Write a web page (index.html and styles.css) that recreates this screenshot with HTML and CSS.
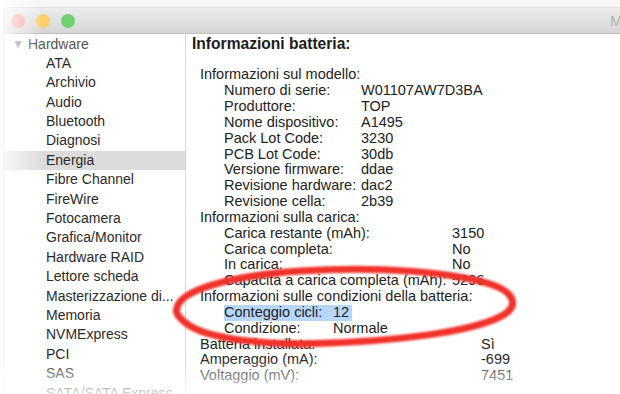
FILE: index.html
```html
<!DOCTYPE html>
<html lang="it">
<head>
    <meta charset="UTF-8">
    <meta name="viewport" content="width=device-width, initial-scale=1.0">
    <title>Informazioni batteria</title>
    <link rel="stylesheet" href="styles.css">
</head>
<body>
    <div class="window">
        <div class="titlebar">
            <div class="lights">
                <span class="light red"></span>
                <span class="light yellow"></span>
                <span class="light green"></span>
            </div>
            <div class="title">MacBook Pro</div>
        </div>

        <div class="main">
            <ul class="sidebar">
                <li class="group"><span class="arrow">▼</span>Hardware</li>
                <li>ATA</li>
                <li>Archivio</li>
                <li>Audio</li>
                <li>Bluetooth</li>
                <li>Diagnosi</li>
                <li class="selected">Energia</li>
                <li>Fibre Channel</li>
                <li>FireWire</li>
                <li>Fotocamera</li>
                <li>Grafica/Monitor</li>
                <li>Hardware RAID</li>
                <li>Lettore scheda</li>
                <li>Masterizzazione di...</li>
                <li>Memoria</li>
                <li>NVMExpress</li>
                <li>PCI</li>
                <li>SAS</li>
                <li>SATA/SATA Express</li>
            </ul>

            <div class="content">
                <h2 class="heading">Informazioni batteria:</h2>

                <div class="section">
                    <div class="section-title">Informazioni sul modello:</div>
                    <div class="rows rows-model">
                        <span>Numero di serie:</span><span>W01107AW7D3BA</span>
                        <span>Produttore:</span><span>TOP</span>
                        <span>Nome dispositivo:</span><span>A1495</span>
                        <span>Pack Lot Code:</span><span>3230</span>
                        <span>PCB Lot Code:</span><span>30db</span>
                        <span>Versione firmware:</span><span>ddae</span>
                        <span>Revisione hardware:</span><span>dac2</span>
                        <span>Revisione cella:</span><span>2b39</span>
                    </div>
                </div>

                <div class="section">
                    <div class="section-title">Informazioni sulla carica:</div>
                    <div class="rows rows-charge">
                        <span>Carica restante (mAh):</span><span>3150</span>
                        <span>Carica completa:</span><span>No</span>
                        <span>In carica:</span><span>No</span>
                        <span>Capacità a carica completa (mAh):</span><span>5296</span>
                    </div>
                </div>

                <div class="section">
                    <div class="section-title">Informazioni sulle condizioni della batteria:</div>
                    <div class="rows-block">
                        <div class="rows rows-health highlight">
                            <span>Conteggio cicli:</span><span>12</span>
                        </div>
                        <div class="rows rows-health">
                            <span>Condizione:</span><span>Normale</span>
                        </div>
                    </div>
                </div>

                <div class="rows rows-top">
                    <span>Batteria installata:</span><span>Sì</span>
                    <span>Amperaggio (mA):</span><span>-699</span>
                    <span>Voltaggio (mV):</span><span>7451</span>
                </div>
            </div>
        </div>
    </div>

    <!-- segno rosso a mano -->
    <svg class="mark" width="620" height="394" viewBox="0 0 620 394">
        <defs>
            <filter id="soft" x="-10%" y="-30%" width="120%" height="160%">
                <feGaussianBlur stdDeviation="1.3"/>
            </filter>
        </defs>
        <path d="M 177 308
                 C 180 290, 230 276, 300 271
                 C 380 266, 450 272, 490 284
                 C 515 292, 518 305, 505 314
                 C 480 330, 410 340, 330 343
                 C 260 346, 210 338, 190 326
                 C 178 318, 175 312, 177 308 Z"
              fill="none" stroke="#f0322a" stroke-width="7" filter="url(#soft)"/>
    </svg>

    <div class="fade"></div>
</body>
</html>
```

FILE: styles.css
```css
* {
    margin: 0;
    padding: 0;
    box-sizing: border-box;
}

body {
    width: 620px;
    height: 394px;
    overflow: hidden;
    position: relative;
    background: #f6f6f6;
    font-family: 'Liberation Sans', Arial, sans-serif;
    color: #222;
}

.window {
    margin: 7px 0 0 3px;
    width: 617px;
    height: 387px;
    background: white;
    border-left: 1px solid #cfcfcf;
    border-top: 1px solid #e2e2e2;
    border-top-left-radius: 5px;
    overflow: hidden;
}

/* barra del titolo */
.titlebar {
    height: 26px;
    display: flex;
    align-items: center;
    padding-left: 7px;
    background: linear-gradient(to bottom, #ececec, #d6d6d6);
    border-bottom: 1px solid #bdbdbd;
}

.lights {
    display: flex;
    gap: 11px;
    flex-shrink: 0;
}

.light {
    width: 14px;
    height: 14px;
    border-radius: 50%;
}

.light.red { background: #f4a6a4; }
.light.yellow { background: #fcd16b; }
.light.green { background: #70d16f; }

.title {
    margin-left: 535px;
    font-size: 15px;
    color: #b0b0b0;
    white-space: nowrap;
}

.main {
    display: flex;
}

/* barra laterale */
.sidebar {
    list-style: none;
    width: 182px;
    flex-shrink: 0;
    border-right: 1px solid #d6d6d6;
    padding-top: 0.5px;
    font-size: 14px;
    color: #2a2a2a;
}

.sidebar li {
    height: 19.4px;
    line-height: 19.4px;
    padding-left: 42px;
    white-space: nowrap;
}

.sidebar li.group {
    padding-left: 8px;
    color: #555;
}

.arrow {
    display: inline-block;
    width: 16px;
    font-size: 12px;
    color: #8c8c8c;
    vertical-align: top;
}

.sidebar li.selected {
    background: #dcdcdc;
}

/* contenuto */
.content {
    padding: 1.6px 0 0 6px;
    font-size: 14.5px;
    line-height: 15.85px;
    white-space: nowrap;
}

.heading {
    font-size: 15.6px;
    font-weight: bold;
    line-height: 15.85px;
    margin-bottom: 15.85px;
    color: #1c1c1c;
}

.section-title {
    padding-left: 8px;
}

.rows {
    display: grid;
    padding-left: 32px;
}

.rows-model {
    grid-template-columns: 137px auto;
}

.rows-charge {
    grid-template-columns: 228px auto;
}

.rows-health {
    grid-template-columns: 109px auto;
}

.rows-block {
    display: flex;
    flex-direction: column;
    align-items: flex-start;
}

.rows-block .rows {
    display: inline-grid;
}

.rows.highlight {
    padding-left: 0;
    margin-left: 32px;
    padding-right: 3px;
    background: #b6d6fb;
}

.rows-top {
    grid-template-columns: 281px auto;
    padding-left: 8px;
}

/* sopra il contenuto */
.mark {
    position: absolute;
    top: 0;
    left: 0;
    pointer-events: none;
}

.fade {
    position: absolute;
    inset: 0;
    pointer-events: none;
    background:
        linear-gradient(to bottom, rgba(255,255,255,0) 358px, rgba(255,255,255,0.45) 376px, rgba(255,255,255,0.8) 394px),
        linear-gradient(to right, rgba(255,255,255,0.85) 0px, rgba(255,255,255,0) 42px);
}
```
